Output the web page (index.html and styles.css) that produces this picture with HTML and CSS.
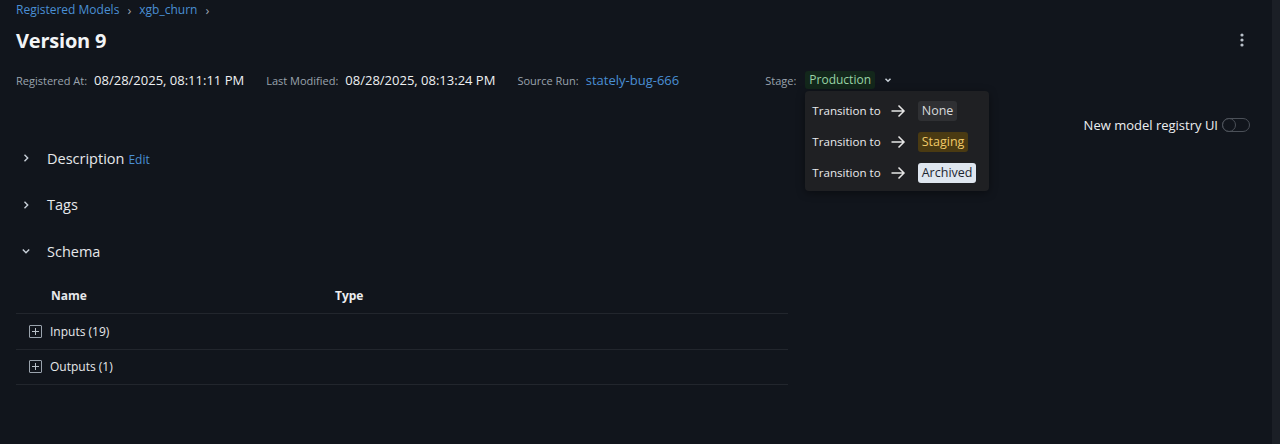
FILE: index.html
```
<!DOCTYPE html>
<html>
<head>
<meta charset="utf-8">
<link rel="stylesheet" href="styles.css">
</head>
<body>
<div class="page">
  <main class="content">
    <nav class="crumbs">
      <a>Registered Models</a><span class="sep">›</span><a>xgb_churn</a><span class="sep">›</span>
    </nav>
    <div class="title-row">
      <h1>Version 9</h1>
      <svg class="kebab" width="4" height="14" viewBox="0 0 4 14"><circle cx="2" cy="2" r="1.6"/><circle cx="2" cy="7" r="1.6"/><circle cx="2" cy="12" r="1.6"/></svg>
    </div>
    <div class="meta">
      <span class="lbl">Registered At:</span><span class="val">08/28/2025, 08:11:11 PM</span>
      <span class="lbl">Last Modified:</span><span class="val">08/28/2025, 08:13:24 PM</span>
      <span class="lbl">Source Run:</span><a class="val link">stately-bug-666</a>
      <span class="lbl stage-lbl">Stage:</span>
      <span class="stage">
        <span class="badge prod">Production</span>
        <svg class="chev" width="10" height="10" viewBox="0 0 10 10"><path d="M2.5 3.8 L5 6.3 L7.5 3.8" fill="none" stroke="#c9d1d9" stroke-width="1.5"/></svg>
        <div class="menu">
          <div class="mi">Transition to <svg class="arrow" width="16" height="14" viewBox="0 0 16 14"><path d="M1.5 7 H14 M8.5 1.5 L14 7 L8.5 12.5" fill="none" stroke="#e6e6e6" stroke-width="1.5"/></svg><span class="badge mb none">None</span></div>
          <div class="mi">Transition to <svg class="arrow" width="16" height="14" viewBox="0 0 16 14"><path d="M1.5 7 H14 M8.5 1.5 L14 7 L8.5 12.5" fill="none" stroke="#e6e6e6" stroke-width="1.5"/></svg><span class="badge mb staging">Staging</span></div>
          <div class="mi">Transition to <svg class="arrow" width="16" height="14" viewBox="0 0 16 14"><path d="M1.5 7 H14 M8.5 1.5 L14 7 L8.5 12.5" fill="none" stroke="#e6e6e6" stroke-width="1.5"/></svg><span class="badge mb archived">Archived</span></div>
        </div>
      </span>
    </div>
    <div class="toggle-row">
      <span>New model registry UI</span><span class="switch"><span class="knob"></span></span>
    </div>
    <section class="sections">
      <div class="sec"><svg class="caret" width="10" height="10" viewBox="0 0 10 10"><path d="M3.5 1.8 L6.7 5 L3.5 8.2" fill="none" stroke="#c9d1d9" stroke-width="1.4"/></svg><span class="sec-title">Description</span><a class="edit">Edit</a></div>
      <div class="sec"><svg class="caret" width="10" height="10" viewBox="0 0 10 10"><path d="M3.5 1.8 L6.7 5 L3.5 8.2" fill="none" stroke="#c9d1d9" stroke-width="1.4"/></svg><span class="sec-title">Tags</span></div>
      <div class="sec"><svg class="caret" width="10" height="10" viewBox="0 0 10 10"><path d="M1.8 3.5 L5 6.7 L8.2 3.5" fill="none" stroke="#c9d1d9" stroke-width="1.4"/></svg><span class="sec-title">Schema</span></div>
    </section>
    <div class="table">
      <div class="tr th"><span class="c1">Name</span><span class="c2">Type</span></div>
      <div class="tr"><span class="plus"></span><span class="c1">Inputs (19)</span></div>
      <div class="tr"><span class="plus"></span><span class="c1">Outputs (1)</span></div>
    </div>
  </main>
  <div class="scrollbar"></div>
</div>
</body>
</html>
```
FILE: styles.css
```
* { box-sizing: border-box; }
html, body { margin: 0; padding: 0; background: #11151c; }
body { font-family: "Open Sans", "Noto Sans", sans-serif; color: #e6e8eb; }
.page { display: flex; height: 444px; }
.content { flex: 1; padding: 0 16px; }
.scrollbar { width: 8px; background: #1b1f26; }
a { color: #4a8fd4; }
.crumbs { font-size: 12px; height: 20px; line-height: 20px; display: flex; color: #4a8fd4; }
.crumbs .sep { color: #9aa3ad; margin: 0 8px; font-size: 13px; }
.title-row { display: flex; justify-content: space-between; align-items: center; height: 40px; }
h1 { margin: 0; font-size: 20px; font-weight: 700; color: #f2f4f6; letter-spacing: -0.2px; }
.kebab { fill: #b8c0c8; margin-right: 12px; }
.meta { display: flex; align-items: center; height: 40px; font-size: 13px; }
.lbl { font-size: 11px; color: #9aa3ad; margin-right: 7px; }
.val { color: #eef0f2; margin-right: 22px; }
.link { color: #4a8fd4; }
.stage-lbl { margin-left: 64px; margin-right: 9px; }
.stage { position: relative; display: flex; align-items: center; }
.badge { font-size: 12px; padding: 1px 4px; border-radius: 3px; line-height: 16px; }
.mb { font-size: 12.5px; line-height: 18px; }
.prod { background: #13271b; color: #99d3a5; }
.chev { margin-left: 8px; }
.menu { position: absolute; top: 20px; left: 0; width: 184px; background: #1f2023; border-radius: 4px; padding: 4px 7px 3px; box-shadow: 0 2px 8px rgba(0,0,0,.4); z-index: 2; }
.mi { display: flex; align-items: center; height: 31px; font-size: 11.6px; color: #e8eaed; white-space: nowrap; }
.arrow { margin: 0 12px 0 9px; }
.none { background: #2f3033; color: #d7d9dc; }
.staging { background: #4a3a12; color: #f0c968; }
.archived { background: #dfe6ef; color: #1d2530; }
.toggle-row { display: flex; justify-content: flex-end; align-items: center; gap: 4px; font-size: 13px; color: #eceef0; margin-top: 15px; padding-right: 6px; height: 20px; }
.switch { width: 28px; height: 14px; border: 1px solid #4b5058; border-radius: 7px; position: relative; }
.knob { position: absolute; left: -1px; top: -1px; width: 14px; height: 14px; border: 1px solid #4b5058; border-radius: 50%; }
.sections { padding-top: 0; }
.sec { display: flex; align-items: center; height: 46.5px; }
.caret { margin-left: 5px; margin-right: 16px; }
.sec-title { font-size: 14.5px; color: #e6e8eb; }
.edit { font-size: 12px; margin-left: 4px; margin-top: 3px; }
.table { width: 772px; margin-top: 4px; }
.tr { display: flex; align-items: center; height: 35.5px; border-bottom: 1px solid #22262d; font-size: 12px; }
.th { font-weight: 700; color: #eceef0; }
.tr .c1 { color: #e6e8eb; }
.th .c1 { margin-left: 35px; width: 284px; }
.plus { width: 13px; height: 13px; border: 1px solid #9aa3ad; margin: 0 8px 0 13px; position: relative; border-radius: 1px; }
.plus::before { content: ""; position: absolute; left: 2px; right: 2px; top: 5px; height: 1px; background: #b8c0c8; }
.plus::after { content: ""; position: absolute; top: 2px; bottom: 2px; left: 5px; width: 1px; background: #b8c0c8; }
```
